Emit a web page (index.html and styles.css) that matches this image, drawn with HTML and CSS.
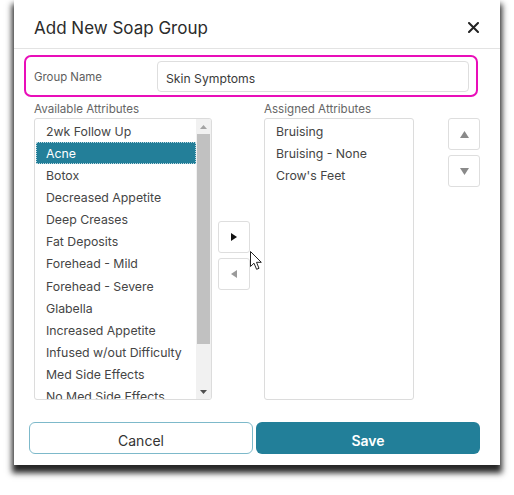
FILE: index.html
```html
<!DOCTYPE html>
<html>
<head>
<meta charset="utf-8">
<link rel="stylesheet" href="styles.css">
</head>
<body>
<div class="dialog">
  <div class="header">
    <div class="title">Add New Soap Group</div>
    <svg class="close" width="11" height="11" viewBox="0 0 11 11"><path d="M1 1L10 10M10 1L1 10" stroke="#222" stroke-width="2" stroke-linecap="round"/></svg>
  </div>
  <div class="content">
    <div class="group-box">
      <div class="group-label">Group Name</div>
      <div class="group-input">Skin Symptoms</div>
    </div>
    <div class="lists">
      <div class="col col-available">
        <div class="col-label">Available Attributes</div>
        <div class="listbox">
          <div class="items">
            <div class="item">2wk Follow Up</div>
            <div class="item selected">Acne</div>
            <div class="item">Botox</div>
            <div class="item">Decreased Appetite</div>
            <div class="item">Deep Creases</div>
            <div class="item">Fat Deposits</div>
            <div class="item">Forehead - Mild</div>
            <div class="item">Forehead - Severe</div>
            <div class="item">Glabella</div>
            <div class="item">Increased Appetite</div>
            <div class="item">Infused w/out Difficulty</div>
            <div class="item">Med Side Effects</div>
            <div class="item">No Med Side Effects</div>
          </div>
          <div class="scrollbar">
            <div class="sb-arrow"><svg width="7" height="4" viewBox="0 0 7 4"><path d="M0 4L3.5 0L7 4Z" fill="#a3a3a3"/></svg></div>
            <div class="sb-track"><div class="sb-thumb"></div></div>
            <div class="sb-arrow"><svg width="7" height="4" viewBox="0 0 7 4"><path d="M0 0L3.5 4L7 0Z" fill="#505050"/></svg></div>
          </div>
        </div>
      </div>
      <div class="move-col">
        <div class="btn-sq"><svg width="6" height="8" viewBox="0 0 6 8"><path d="M0 0L6 4L0 8Z" fill="#111"/></svg></div>
        <div class="btn-sq"><svg width="6" height="8" viewBox="0 0 6 8"><path d="M6 0L0 4L6 8Z" fill="#9a9a9a"/></svg></div>
      </div>
      <div class="col col-assigned">
        <div class="col-label">Assigned Attributes</div>
        <div class="listbox">
          <div class="items">
            <div class="item">Bruising</div>
            <div class="item">Bruising - None</div>
            <div class="item">Crow's Feet</div>
          </div>
        </div>
      </div>
      <div class="order-col">
        <div class="btn-sq"><svg width="9" height="7" viewBox="0 0 9 7"><path d="M0 7L4.5 0L9 7Z" fill="#8a8a8a"/></svg></div>
        <div class="btn-sq"><svg width="9" height="7" viewBox="0 0 9 7"><path d="M0 0L4.5 7L9 0Z" fill="#8a8a8a"/></svg></div>
      </div>
    </div>
    <div class="footer">
      <button class="btn btn-cancel">Cancel</button>
      <button class="btn btn-save">Save</button>
    </div>
  </div>
  <svg class="cursor" width="13" height="20" viewBox="0 0 13 20"><path d="M0.5 0.5L0.5 15.5L4 12.2L6.6 18.3L9 17.3L6.5 11.3L11.3 11.3Z" fill="#fff" stroke="#222" stroke-width="1" stroke-linejoin="round"/></svg>
</div>
</body>
</html>
```

FILE: styles.css
```css
html, body {
  margin: 0;
  padding: 0;
  background: #ffffff;
}
body {
  font-family: Inter, "Noto Sans", sans-serif;
  color: #444;
  min-height: 495px;
}
.dialog {
  position: relative;
  margin-left: 14px;
  width: 486px;
  height: 465px;
  background: #fff;
  box-shadow: 0 6px 6px 2px rgba(0, 0, 0, 0.85);
}
.header {
  height: 49px;
  border-bottom: 1px solid #e3e3e3;
  display: flex;
  align-items: center;
  justify-content: space-between;
  padding: 8px 21px 0 20px;
  box-sizing: border-box;
}
.title {
  font-size: 17px;
  color: #2b2b2b;
}
.close {
  display: block;
  margin-top: -2px;
}
.content {
  padding: 6px 0 0 0;
}
.group-box {
  margin-left: 10px;
  width: 454px;
  height: 42px;
  box-sizing: border-box;
  border: 2.5px solid #e90eb9;
  border-radius: 7px;
  display: flex;
  align-items: center;
  padding: 0 7px 0 8px;
}
.group-label {
  width: 123px;
  font-size: 11.4px;
  color: #5e5e5e;
  padding-top: 2px;
}
.group-input {
  flex: 1;
  height: 31px;
  box-sizing: border-box;
  border: 1px solid #dedede;
  border-radius: 4px;
  display: flex;
  align-items: center;
  padding: 5px 0 0 8px;
  font-size: 12.2px;
  color: #3a3a3a;
}
.lists {
  display: flex;
  align-items: flex-start;
  margin: 2px 0 0 20px;
}
.col-label {
  font-size: 11.6px;
  line-height: 16px;
  color: #666;
  padding-top: 2px;
  margin-bottom: 1px;
}
.col-available {
  width: 178px;
}
.col-assigned {
  width: 150px;
  margin-left: 14px;
}
.listbox {
  height: 282px;
  box-sizing: border-box;
  border: 1px solid #dcdcdc;
  border-radius: 3px;
  display: flex;
  overflow: hidden;
}
.items {
  flex: 1;
  overflow: hidden;
  padding-top: 1px;
}
.item {
  height: 22.08px;
  line-height: 24px;
  padding-left: 11px;
  font-size: 12.3px;
  color: #454545;
  white-space: nowrap;
}
.item.selected {
  background: #237f99;
  color: #fff;
  outline: 1px dotted rgba(255, 255, 255, 0.7);
  outline-offset: -1px;
  margin-left: 1px;
  padding-left: 10px;
}
.scrollbar {
  width: 15px;
  background: #f1f1f1;
  display: flex;
  flex-direction: column;
}
.sb-arrow {
  height: 15px;
  display: flex;
  align-items: center;
  justify-content: center;
}
.sb-track {
  flex: 1;
  padding: 0 1px;
}
.sb-thumb {
  height: 210px;
  background: #c1c1c1;
}
.move-col {
  display: flex;
  flex-direction: column;
  gap: 5px;
  margin-left: 6px;
  margin-top: 122px;
}
.order-col {
  display: flex;
  flex-direction: column;
  gap: 5px;
  margin-left: 34px;
  margin-top: 19px;
}
.btn-sq {
  width: 32px;
  height: 32px;
  box-sizing: border-box;
  border: 1px solid #dedede;
  border-radius: 3px;
  display: flex;
  align-items: center;
  justify-content: center;
  background: #fff;
}
.footer {
  display: flex;
  gap: 3px;
  margin: 22px 0 0 15px;
}
.btn {
  width: 224px;
  height: 32px;
  border-radius: 6px;
  font-family: Inter, "Noto Sans", sans-serif;
  font-size: 14px;
  box-sizing: border-box;
  padding: 4px 0 0 0;
}
.btn-cancel {
  background: #fff;
  border: 1.5px solid #7db9ca;
  color: #333;
}
.btn-save {
  background: #227f99;
  border: none;
  color: #fff;
  font-weight: 600;
}
.cursor {
  position: absolute;
  left: 236px;
  top: 251px;
}
```
